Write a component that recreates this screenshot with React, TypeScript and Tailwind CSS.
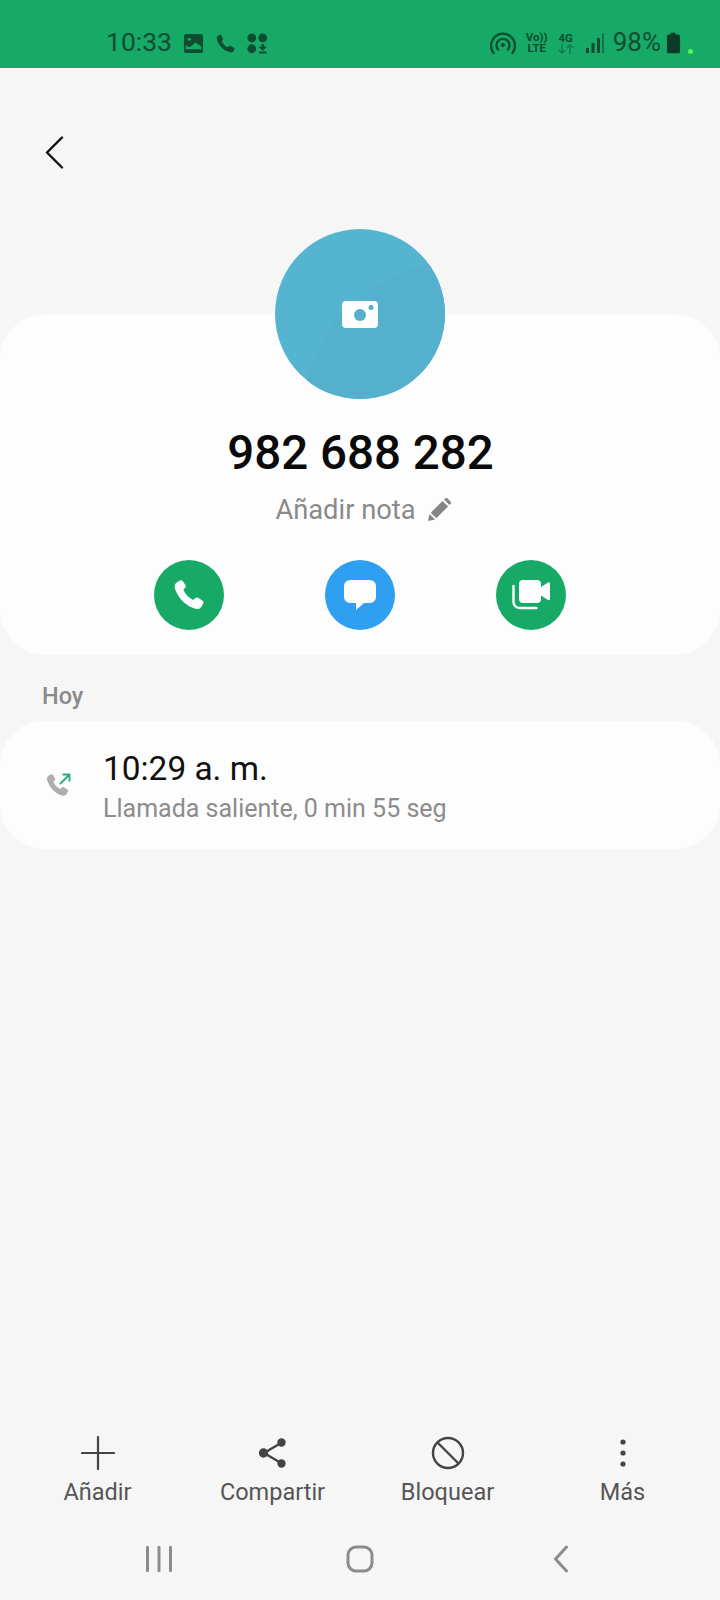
import React from 'react';

function StatusBar() {
  return (
    <div className="flex h-[68px] shrink-0 items-end bg-[#17a966] pb-[11px] text-[#0e4d30]">
      <div className="ml-[106px] flex items-center">
        <span className="mb-[2px] text-[26.500px] leading-[26px] font-normal">10:33</span>
        <svg width="21" height="21" viewBox="0 0 22 22" className="ml-[11px]">
          <rect x="1" y="1" width="20" height="20" rx="3" fill="#0e4d30" />
          <circle cx="6.500" cy="6.500" r="1.600" fill="#17a966" />
          <path d="M3 17v-4l4 2 6-5 6 4v3z" fill="#17a966" />
        </svg>
        <svg width="21" height="21" viewBox="0 0 24 24" className="ml-[11px]" fill="#0e4d30">
          <path d="M6.600 1.500 9.500 7 7.600 9.400c1.300 3 3.600 5.400 6.800 6.900l2.400-1.900 5.700 3-1.400 3.600c-.5 1-1.400 1.500-2.600 1.300C10 21 3 13.500 2 5.800c-.1-1.200.4-2.200 1.400-2.800z" />
        </svg>
        <svg width="21" height="21" viewBox="0 0 22 22" className="ml-[11px]" fill="#0e4d30">
          <circle cx="5" cy="5" r="4.600" />
          <circle cx="16.500" cy="5" r="4.600" />
          <circle cx="5" cy="16.500" r="4.600" />
          <path d="M15 11.500h3v3h3l-4.500 4-4.500-4h3zM12.500 19.500h8V21.500h-8z" />
        </svg>
      </div>
      <div className="ml-auto flex items-center">
        <svg width="26" height="24" viewBox="0 0 26 24" fill="none" stroke="#0e4d30" strokeWidth="2.400" strokeLinecap="round">
          <path d="M3.500 22a12 12 0 1 1 19 0" />
          <path d="M8 18.500a6.500 6.500 0 1 1 10 0" />
          <circle cx="13" cy="14" r="1.600" fill="#0e4d30" strokeWidth="1" />
        </svg>
        <div className="ml-[10px] flex w-[22px] flex-col items-center text-[11.500px] leading-[11px] font-bold">
          <span>Vo))</span>
          <span>LTE</span>
        </div>
        <div className="ml-[9px] flex w-[18px] flex-col items-center text-[11.500px] leading-[11px] font-bold">
          <span>4G</span>
          <svg width="16" height="10" viewBox="0 0 16 10" fill="none" stroke="#127a4c" strokeWidth="1.400">
            <path d="M4 0v9M1 6l3 3 3-3M12 10V1M9 4l3-3 3 3" />
          </svg>
        </div>
        <svg width="20" height="22" viewBox="0 0 20 22" className="ml-[10px]">
          <rect x="1" y="16" width="3" height="5" fill="#0e4d30" />
          <rect x="6.500" y="11" width="3" height="10" fill="#0e4d30" />
          <rect x="12" y="6" width="3" height="15" fill="#0e4d30" />
          <rect x="17" y="1" width="2" height="20" fill="#11744a" />
        </svg>
        <span className="mb-[2px] ml-[8px] text-[26px] leading-[26px]">98%</span>
        <svg width="15" height="22" viewBox="0 0 16 22" className="ml-[5px]">
          <path d="M5 0h5v2h3a2 2 0 0 1 2 2v16a2 2 0 0 1-2 2H3a2 2 0 0 1-2-2V4a2 2 0 0 1 2-2h2z" fill="#0e3b27" />
        </svg>
        <div className="mt-[16px] mr-[27px] ml-[7px] size-[5px] rounded-full bg-[#4ef65a]" />
      </div>
    </div>
  );
}

function Avatar() {
  return (
    <div className="relative z-10 flex size-[170px] items-center justify-center overflow-hidden rounded-full bg-[#55b5d0]">
      <svg width="170" height="170" viewBox="0 0 170 170" className="absolute inset-0">
        <path d="M28 170C40 100 90 45 170 32V170z" fill="#54b0cd" />
      </svg>
      <svg width="36" height="27" viewBox="0 0 36 27" className="relative">
        <rect width="36" height="27" rx="4" fill="#fff" />
        <circle cx="18" cy="14" r="6" fill="#55b0cd" />
        <circle cx="29" cy="6.500" r="2.500" fill="#55b0cd" />
      </svg>
    </div>
  );
}

function RoundAction({ color, children }: { color: string; children: React.ReactNode }) {
  return <div className={`flex size-[70px] items-center justify-center rounded-full ${color}`}>{children}</div>;
}

function BottomAction({ label, children }: { label: string; children: React.ReactNode }) {
  return (
    <div className="flex flex-col items-center">
      <div className="flex h-[36px] items-center justify-center">{children}</div>
      <span className="mt-[6px] text-[23.500px] leading-[30px] text-[#555555]">{label}</span>
    </div>
  );
}

export default function App() {
  return (
    <div className="flex h-[1600px] w-[720px] flex-col overflow-hidden bg-[#f6f6f6] font-['Roboto',sans-serif]">
      <StatusBar />

      <div className="flex h-[161px] shrink-0 items-start pt-[68px] pl-[45px]">
        <svg width="19" height="33" viewBox="0 0 19 33" fill="none" stroke="#111" strokeWidth="2.400" strokeLinecap="round" strokeLinejoin="round">
          <path d="M17 1.500 2 16.500l15 15" />
        </svg>
      </div>

      <div className="flex justify-center">
        <Avatar />
      </div>

      <section className="-mt-[85px] flex h-[341px] shrink-0 flex-col items-center rounded-[46px] bg-[#fdfdfd] pt-[111px]">
        <h1 className="pl-[1px] text-[47.500px] leading-[56px] font-medium text-[#0a0a0a]">982 688 282</h1>
        <div className="mt-[14px] flex items-center pl-[6px] text-[#8a8a8a]">
          <span className="text-[27.300px] leading-[30px]">Añadir nota</span>
          <svg width="24" height="24" viewBox="0 0 24 24" fill="#858585" className="ml-[11px]">
            <path d="M1 23l1.500-7 5.500 5.500zM3.800 14.700 15.500 3 21 8.500 9.300 20.200zM17 1.500l1.200-1a1.800 1.800 0 0 1 2.400 0l2.900 2.900a1.800 1.800 0 0 1 0 2.400l-1 1.200z" />
          </svg>
        </div>
        <div className="mt-[35px] grid grid-cols-3 gap-[101px]">
          <RoundAction color="bg-[#17a966]">
            <svg width="32" height="32" viewBox="0 0 34 34" fill="#fdfdfd">
              <path d="M7.500 1.500c1-.5 2-.3 2.700.6l3 4.400c.6.900.5 2-.2 2.800L11 11.500c1.800 4.500 5.500 8.300 10.500 10.700l2.300-2c.8-.7 1.900-.8 2.800-.2l4.900 3c.9.600 1.200 1.700.7 2.700-1 2.400-2.500 5-4.200 5.800-1.700.7-4.300.4-6.500-.6C12.500 27.500 5.800 20.500 2.500 11.500 1.500 9 1.500 7 2.300 5.500 3.300 3.800 5.500 2.400 7.500 1.500z" />
            </svg>
          </RoundAction>
          <RoundAction color="bg-[#2f9ff2]">
            <svg width="32" height="31" viewBox="0 0 32 31" fill="#fdfdfd">
              <path d="M6 0h20a6 6 0 0 1 6 6v11a6 6 0 0 1-6 6h-6l-8 7v-7H6a6 6 0 0 1-6-6V6a6 6 0 0 1 6-6z" />
            </svg>
          </RoundAction>
          <RoundAction color="bg-[#17a966]">
            <svg width="38" height="30" viewBox="0 0 38 30" fill="none">
              <path d="M1.500 6v16a6 6 0 0 0 6 6h17" stroke="#fdfdfd" strokeWidth="2.400" strokeLinecap="round" />
              <path d="M11 0h14a4 4 0 0 1 4 4v3l7-4.500c.8-.5 2 0 2 1V19c0 1-1.200 1.500-2 1l-7-4.500V19a4 4 0 0 1-4 4H11a4 4 0 0 1-4-4V4a4 4 0 0 1 4-4z" fill="#fdfdfd" />
            </svg>
          </RoundAction>
        </div>
      </section>

      <div className="mt-[26px] pl-[42px] text-[23.500px] leading-[30px] font-medium text-[#8a8a8a]">Hoy</div>

      <section className="mt-[10px] flex h-[128px] shrink-0 items-center rounded-[44px] bg-[#fdfdfd]">
        <svg width="28" height="28" viewBox="0 0 28 28" className="ml-[45px] shrink-0">
          <path d="M6 3.500c.8-.4 1.500-.2 2 .5l2 3.200c.4.600.3 1.400-.2 2l-1.500 1.500c1.200 3 3.500 5.500 7 7.200l1.600-1.400c.5-.5 1.300-.6 2-.2l3.500 2.200c.7.400.9 1.200.5 2-.7 1.700-1.800 3.500-3 4-1.200.5-3 .3-4.600-.4C9.500 21.500 4.800 16.500 2.500 10.200 1.800 8.500 1.800 7 2.400 6 3.100 4.800 4.600 4.100 6 3.500z" fill="#adadad" />
          <path d="M15 13 24 4M17.500 3.500H24.500V10.500" fill="none" stroke="#22b07a" strokeWidth="1.800" />
        </svg>
        <div className="ml-[30px] flex flex-col pt-[4px]">
          <span className="text-[33.400px] leading-[37px] font-normal text-[#111111]">10:29 a. m.</span>
          <span className="mt-[7px] text-[25px] leading-[30px] text-[#8c8c8c]">Llamada saliente, 0 min 55 seg</span>
        </div>
      </section>

      <div className="mt-auto grid grid-cols-4 px-[10px]">
        <BottomAction label="Añadir">
          <svg width="34" height="34" viewBox="0 0 34 34" fill="none" stroke="#444444" strokeWidth="2.200" strokeLinecap="round">
            <path d="M17 1v32M1 17h32" />
          </svg>
        </BottomAction>
        <BottomAction label="Compartir">
          <svg width="30" height="32" viewBox="0 0 30 32" fill="#444444" stroke="#444444" strokeWidth="2.400">
            <path d="M23 6 6 16l17 10" fill="none" />
            <circle cx="23.500" cy="5.500" r="3" />
            <circle cx="5.500" cy="16" r="3.500" />
            <circle cx="23.500" cy="26.500" r="3" />
          </svg>
        </BottomAction>
        <BottomAction label="Bloquear">
          <svg width="34" height="34" viewBox="0 0 34 34" fill="none" stroke="#444444" strokeWidth="2.400">
            <circle cx="17" cy="17" r="15" />
            <path d="M6.500 6.500 27.500 27.500" />
          </svg>
        </BottomAction>
        <BottomAction label="Más">
          <svg width="8" height="32" viewBox="0 0 8 32" fill="#444444">
            <circle cx="4" cy="5" r="2.600" />
            <circle cx="4" cy="16" r="2.600" />
            <circle cx="4" cy="27" r="2.600" />
          </svg>
        </BottomAction>
      </div>

      <div className="mt-[35px] mb-[24px] grid h-[34px] grid-cols-3 items-center justify-items-center px-[59px]">
        <svg width="28" height="26" viewBox="0 0 28 26" fill="#8c8c8c">
          <rect x="1" y="0" width="3" height="26" rx="1" />
          <rect x="12.500" y="0" width="3" height="26" rx="1" />
          <rect x="24" y="0" width="3" height="26" rx="1" />
        </svg>
        <svg width="28" height="28" viewBox="0 0 28 28" fill="none" stroke="#8c8c8c" strokeWidth="3">
          <rect x="2" y="2" width="24" height="24" rx="8" />
        </svg>
        <svg width="16" height="28" viewBox="0 0 16 28" fill="none" stroke="#8c8c8c" strokeWidth="3" strokeLinecap="round" strokeLinejoin="round">
          <path d="M13.500 2 2.500 14l11 12" />
        </svg>
      </div>
    </div>
  );
}
